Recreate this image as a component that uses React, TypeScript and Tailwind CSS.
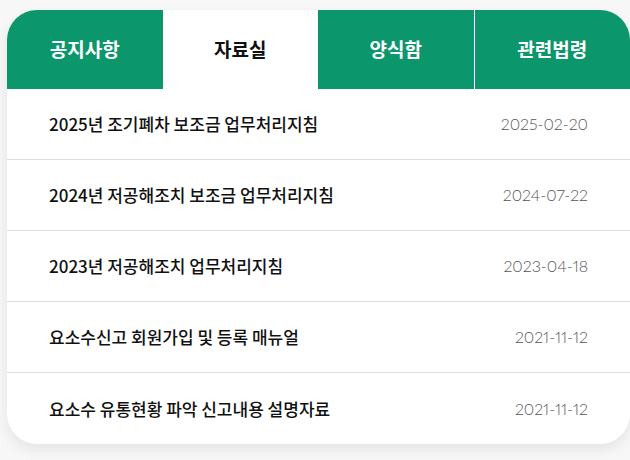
import React from 'react';

const tabs = ['공지사항', '자료실', '양식함', '관련법령'];

const rows = [
  { title: '2025년 조기폐차 보조금 업무처리지침', date: '2025-02-20' },
  { title: '2024년 저공해조치 보조금 업무처리지침', date: '2024-07-22' },
  { title: '2023년 저공해조치 업무처리지침', date: '2023-04-18' },
  { title: '요소수신고 회원가입 및 등록 매뉴얼', date: '2021-11-12' },
  { title: '요소수 유통현황 파악 신고내용 설명자료', date: '2021-11-12' },
];

export default function App() {
  return (
    <div className="h-[460px] w-[630px] overflow-hidden bg-[#f7f7f7] pl-[7px] pt-[10px]">
      <div className="w-[623px] overflow-hidden rounded-[30px] bg-white shadow-[0_6px_14px_rgba(0,0,0,0.08)]">
        <div className="flex h-[79px]">
          {tabs.map((t, i) => (
            <div
              key={t}
              className={
                'flex flex-1 items-center justify-center text-[19px] font-bold font-["Noto_Sans_CJK_KR",sans-serif] ' +
                (i === 1
                  ? 'bg-white text-[#111]'
                  : 'bg-[#0c966b] text-white') +
                (i === 3 ? ' border-l border-white' : '')
              }
            >
              {t}
            </div>
          ))}
        </div>
        <div className="flex flex-col">
          {rows.map((r, i) => (
            <div
              key={i}
              className={
                'flex h-[71px] items-center justify-between pl-[42px] pr-[42px] ' +
                (i < rows.length - 1 ? 'border-b border-[#dedede]' : '')
              }
            >
              <span className='text-[17px] font-medium text-[#111] font-["Noto_Sans_CJK_KR",sans-serif]'>
                {r.title}
              </span>
              <span className='text-[16px] font-light proportional-nums text-[#555] font-["Lato",sans-serif]'>{r.date}</span>
            </div>
          ))}
        </div>
      </div>
    </div>
  );
}
